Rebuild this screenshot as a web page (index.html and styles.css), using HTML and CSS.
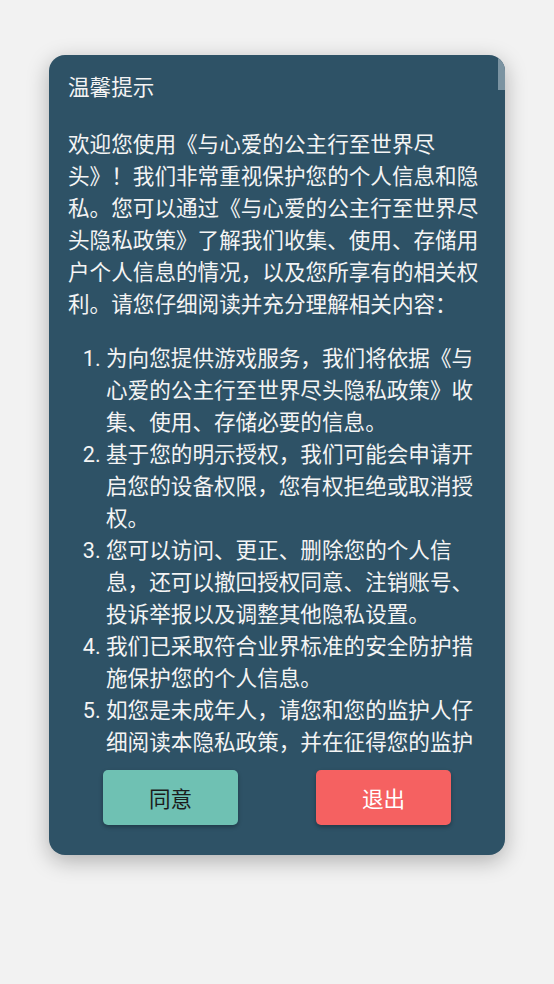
FILE: index.html
```html
<!DOCTYPE html>
<html lang="zh-CN">
<head>
<meta charset="utf-8">
<title>温馨提示</title>
<link rel="stylesheet" href="styles.css">
</head>
<body>
<div class="dialog">
  <div class="scroll">
    <div class="title">温馨提示</div>
    <p class="intro">欢迎您使用《与心爱的公主行至世界尽头》！我们非常重视保护您的个人信息和隐私。您可以通过《与心爱的公主行至世界尽头隐私政策》了解我们收集、使用、存储用户个人信息的情况，以及您所享有的相关权利。请您仔细阅读并充分理解相关内容：</p>
    <ol class="items">
      <li>为向您提供游戏服务，我们将依据《与心爱的公主行至世界尽头隐私政策》收集、使用、存储必要的信息。</li>
      <li>基于您的明示授权，我们可能会申请开启您的设备权限，您有权拒绝或取消授权。</li>
      <li>您可以访问、更正、删除您的个人信息，还可以撤回授权同意、注销账号、投诉举报以及调整其他隐私设置。</li>
      <li>我们已采取符合业界标准的安全防护措施保护您的个人信息。</li>
      <li>如您是未成年人，请您和您的监护人仔细阅读本隐私政策，并在征得您的监护人同意的前提下使用我们的服务或向我们提供个人信息。</li>
    </ol>
    <p class="intro">请您阅读完整版隐私政策了解详细信息。如您同意，请点击“同意”开始接受我们的服务。</p>
  </div>
  <div class="thumb"></div>
  <div class="actions">
    <button class="btn agree">同意</button>
    <button class="btn quit">退出</button>
  </div>
</div>
</body>
</html>
```
FILE: styles.css
```css
html, body {
  margin: 0;
  padding: 0;
}
body {
  background: #f2f2f2;
  width: 554px;
  height: 984px;
  font-family: Roboto, "Noto Sans CJK SC", sans-serif;
}
.dialog {
  position: relative;
  margin: 55px 0 0 49px;
  width: 456px;
  height: 800px;
  background: #2e5266;
  border-radius: 16px;
  overflow: hidden;
  box-shadow: 0 6px 22px rgba(0, 0, 0, 0.28);
  display: flex;
  flex-direction: column;
}
.scroll {
  height: 705px;
  overflow: hidden;
  padding: 17px 19px 0 19px;
  box-sizing: border-box;
  color: #f4f4f4;
  font-size: 21.6px;
  line-height: 32px;
}
.title {
  margin-bottom: 25px;
}
.intro {
  margin: 0 0 21.6px 0;
}
.items {
  margin: 0 0 21.6px 0;
  padding-left: 38px;
}
.thumb {
  position: absolute;
  top: 0;
  right: 0;
  width: 7px;
  height: 35px;
  background: #7b93a1;
}
.actions {
  display: flex;
  justify-content: space-between;
  padding: 10px 54px 0 54px;
}
.btn {
  width: 135px;
  height: 55px;
  border: none;
  border-radius: 5px;
  font-family: Roboto, "Noto Sans CJK SC", sans-serif;
  font-size: 21.6px;
  box-shadow: 0 2px 4px rgba(0, 0, 0, 0.3);
  padding: 0;
}
.agree {
  background: #6fc1b3;
  color: #1b1b1b;
}
.quit {
  background: #f56161;
  color: #ffffff;
}
```
